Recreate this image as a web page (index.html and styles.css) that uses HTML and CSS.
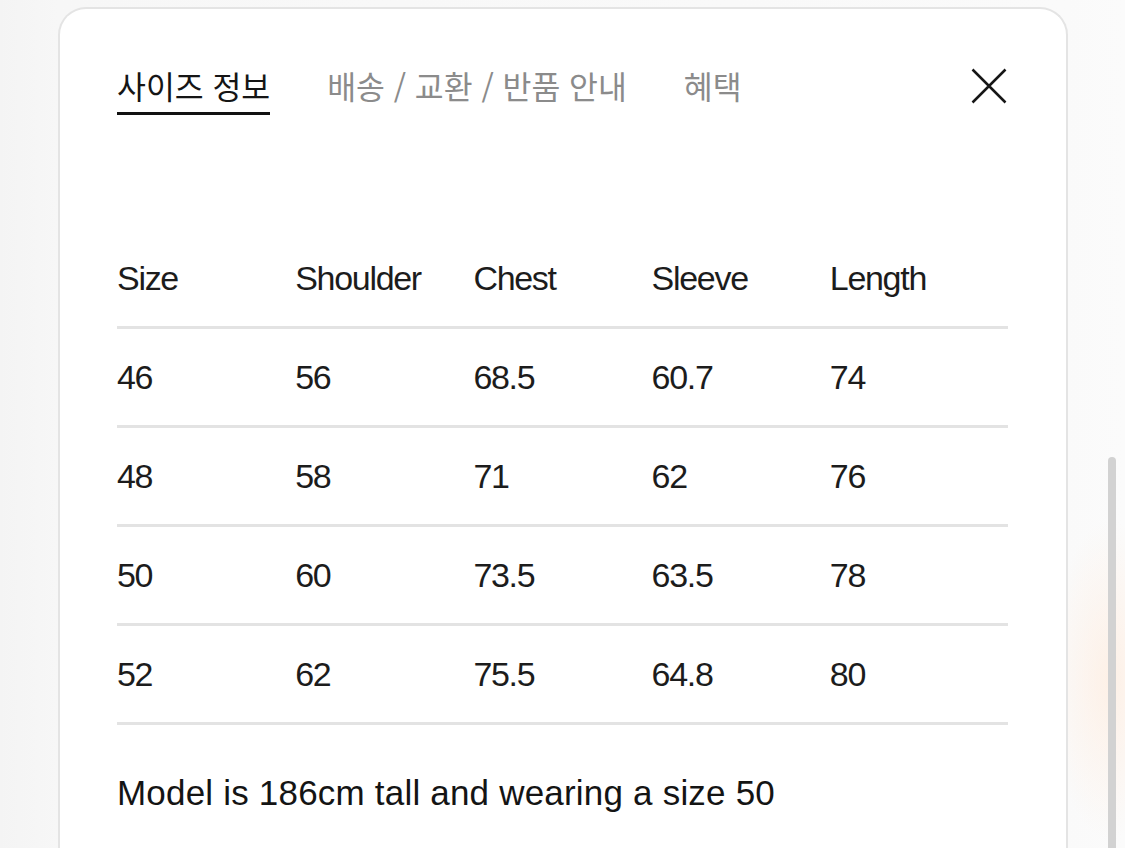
FILE: index.html
```html
<!DOCTYPE html>
<html lang="ko">
<head>
<meta charset="utf-8">
<title>사이즈 정보</title>
<link rel="stylesheet" href="styles.css">
</head>
<body>
<div class="page">
  <section class="card">
    <header class="tabs">
      <nav class="tab-list">
        <span class="tab active">사이즈 정보</span>
        <span class="tab">배송 / 교환 / 반품 안내</span>
        <span class="tab">혜택</span>
      </nav>
      <button class="close" aria-label="닫기">
        <svg width="36" height="36" viewBox="0 0 36 36"><path d="M1.5 1.5 L34.5 34.5 M34.5 1.5 L1.5 34.5" stroke="#161616" stroke-width="2.5" fill="none"/></svg>
      </button>
    </header>
    <div class="table">
      <div class="row head">
        <span>Size</span><span>Shoulder</span><span>Chest</span><span>Sleeve</span><span>Length</span>
      </div>
      <div class="row">
        <span>46</span><span>56</span><span>68.5</span><span>60.7</span><span>74</span>
      </div>
      <div class="row">
        <span>48</span><span>58</span><span>71</span><span>62</span><span>76</span>
      </div>
      <div class="row">
        <span>50</span><span>60</span><span>73.5</span><span>63.5</span><span>78</span>
      </div>
      <div class="row">
        <span>52</span><span>62</span><span>75.5</span><span>64.8</span><span>80</span>
      </div>
    </div>
    <p class="note">Model is 186cm tall and wearing a size 50</p>
  </section>
  <div class="scrollbar"></div>
</div>
</body>
</html>
```
FILE: styles.css
```css
html, body {
  margin: 0;
  padding: 0;
  height: 100%;
  overflow: hidden;
}
body {
  background:
    radial-gradient(ellipse 60px 160px at 1110px 680px, rgba(255, 236, 222, 0.7), rgba(255, 255, 255, 0) 100%),
    linear-gradient(90deg, #f4f4f4 0px, #f7f7f7 58px, #fafafa 1068px, #fbfbfb 1125px);
  font-family: "Liberation Sans", Arial, "Noto Sans CJK KR", sans-serif;
  color: #141414;
}
.page {
  position: relative;
  height: 848px;
  padding-top: 7px;
  box-sizing: border-box;
}
.card {
  margin-left: 58px;
  width: 1010px;
  height: 860px;
  box-sizing: border-box;
  background: #fff;
  border: 2px solid #e4e4e4;
  border-bottom: none;
  border-radius: 28px 28px 0 0;
  padding: 57px 58px 0 57px;
}
.tabs {
  display: flex;
  align-items: flex-start;
  justify-content: space-between;
}
.tab-list {
  display: flex;
  gap: 57px;
}
.tab {
  font-family: "Noto Sans CJK KR", sans-serif;
  font-size: 31.4px;
  line-height: 40px;
  color: #8b8b8b;
  padding-bottom: 6px;
  border-bottom: 3px solid transparent;
  letter-spacing: 0;
}
.tab.active {
  color: #151515;
  border-bottom-color: #111;
}
.close {
  margin: 2px 1px 0 0;
  padding: 0;
  border: none;
  background: none;
  width: 36px;
  height: 36px;
  display: flex;
}
.table {
  margin-top: 115px;
  width: 891px;
}
.row {
  display: grid;
  grid-template-columns: repeat(5, 1fr);
  height: 96px;
  align-items: center;
  border-bottom: 3px solid #e3e3e3;
  font-size: 34px;
  letter-spacing: -1.3px;
  color: #1c1c1c;
}
.note {
  margin: 48px 0 0;
  font-size: 35px;
  line-height: 40px;
  letter-spacing: 0.2px;
  color: #141414;
}
.scrollbar {
  position: absolute;
  left: 1108px;
  top: 457px;
  width: 8px;
  height: 420px;
  border-radius: 4px;
  background: #d2d2d2;
}
```
